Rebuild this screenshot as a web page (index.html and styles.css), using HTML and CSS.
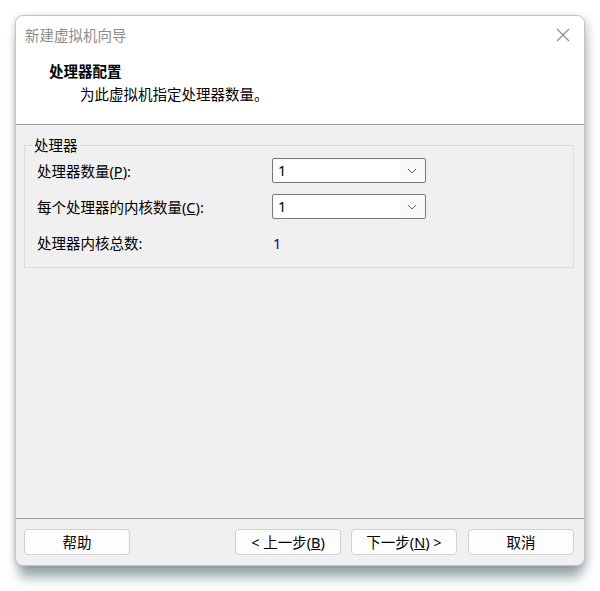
FILE: index.html
```html
<!DOCTYPE html>
<html lang="zh-CN">
<head>
    <meta charset="UTF-8">
    <title>新建虚拟机向导</title>
    <link rel="stylesheet" href="styles.css">
</head>
<body>
    <div class="window">
        <div class="titlebar">
            <span class="title">新建虚拟机向导</span>
            <svg class="close" width="14" height="14" viewBox="0 0 14 14">
                <path d="M1 1 L13 13 M13 1 L1 13" stroke="#8a8a8a" stroke-width="1.1" fill="none"/>
            </svg>
        </div>

        <div class="header">
            <div class="header-title">处理器配置</div>
            <div class="header-sub">为此虚拟机指定处理器数量。</div>
        </div>

        <div class="content">
            <fieldset class="group">
                <legend>处理器</legend>
                <div class="row">
                    <label>处理器数量(<u>P</u>):</label>
                    <div class="combo">
                        <span class="combo-value">1</span>
                        <span class="combo-arrow">
                            <svg width="10" height="6" viewBox="0 0 10 6"><path d="M1 1 L5 5 L9 1" stroke="#666" stroke-width="1" fill="none"/></svg>
                        </span>
                    </div>
                </div>
                <div class="row">
                    <label>每个处理器的内核数量(<u>C</u>):</label>
                    <div class="combo">
                        <span class="combo-value">1</span>
                        <span class="combo-arrow">
                            <svg width="10" height="6" viewBox="0 0 10 6"><path d="M1 1 L5 5 L9 1" stroke="#666" stroke-width="1" fill="none"/></svg>
                        </span>
                    </div>
                </div>
                <div class="row">
                    <label>处理器内核总数:</label>
                    <span class="total">1</span>
                </div>
            </fieldset>
        </div>

        <div class="footer">
            <button class="btn">帮助</button>
            <div class="spacer"></div>
            <button class="btn">&lt; 上一步(<u>B</u>)</button>
            <button class="btn">下一步(<u>N</u>) &gt;</button>
            <button class="btn cancel">取消</button>
        </div>
    </div>
</body>
</html>
```

FILE: styles.css
```css
* {
    margin: 0;
    padding: 0;
    box-sizing: border-box;
    font-family: "Noto Sans", "Noto Sans CJK SC", sans-serif;
}

html {
    background-color: #ffffff;
}

body {
    min-height: 591px;
    color: #000000;
    font-size: 14.5px;
    padding: 15px 0 0 15px;
}

.window {
    width: 570px;
    height: 551px;
    border: 1px solid #c4c4c4;
    border-radius: 8px;
    overflow: hidden;
    background-color: #f0f0f0;
    display: flex;
    flex-direction: column;
    box-shadow: 0 16px 12px -4px rgba(90, 115, 122, 0.55), 4px 4px 8px rgba(0, 0, 0, 0.16), -2px 0 5px rgba(0, 0, 0, 0.1);
}

.titlebar {
    height: 38px;
    background-color: #ffffff;
    display: flex;
    align-items: center;
    padding: 0 14px 0 9px;
}

.title {
    flex: 1;
    color: #8c8c8c;
    font-size: 14.5px;
    line-height: 20px;
}

.close {
    display: block;
}

.header {
    height: 71px;
    background-color: #ffffff;
    border-bottom: 1px solid #a0a0a0;
    padding: 7px 0 0 33px;
}

.header-title {
    font-weight: 700;
    font-size: 14.5px;
    line-height: 20px;
}

.header-sub {
    line-height: 20px;
    margin-top: 3px;
    padding-left: 31px;
}

.content {
    flex: 1;
    padding: 11px 10px 0 8px;
}

.group {
    border: 1px solid #dcdcdc;
    padding: 4px 12px 12px 12px;
}

.group legend {
    margin-left: -5px;
    padding: 0 2px;
    line-height: 18px;
}

.row {
    height: 25px;
    display: flex;
    align-items: center;
    margin-bottom: 11px;
}

.row:last-child {
    margin-bottom: 0;
}

.row label {
    width: 235px;
    line-height: 20px;
}

.combo {
    width: 154px;
    height: 25px;
    border: 1px solid #7a7a7a;
    border-radius: 2px;
    background-color: #f9f9f9;
    display: flex;
    padding: 1px;
}

.combo-value {
    flex: 1;
    background-color: #ffffff;
    padding-left: 4px;
    line-height: 21px;
}

.combo-arrow {
    width: 24px;
    display: flex;
    align-items: center;
    justify-content: center;
}

.total {
    color: #000080;
    padding-left: 1px;
}

.footer {
    height: 47px;
    border-top: 1px solid #a0a0a0;
    display: flex;
    align-items: flex-start;
    padding: 10px 10px 0 8px;
    gap: 10px;
}

.spacer {
    flex: 1;
}

.btn {
    width: 106px;
    height: 26px;
    border: 1px solid #d0d0d0;
    border-radius: 4px;
    background-color: #fdfdfd;
    font-size: 14.5px;
    color: #000000;
    line-height: 20px;
}

.cancel {
    margin-left: 1px;
}
```
